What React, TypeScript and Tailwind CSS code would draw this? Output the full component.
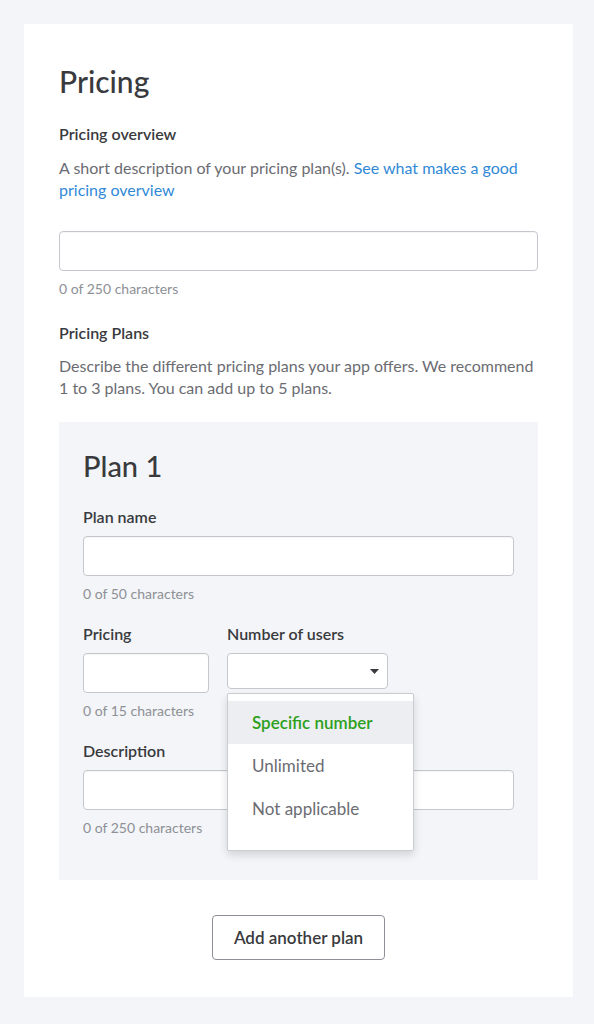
import React from 'react';

const font = { fontFamily: 'Lato, "Open Sans", sans-serif' };

const TextField = ({ className = '' }: { className?: string }) => (
    <div className={`h-[40px] bg-white border border-[#c4c7cc] rounded-[4px] shadow-[inset_0_1px_1px_rgba(0,0,0,0.04)] ${className}`} />
);

const Counter = ({ text }: { text: string }) => (
    <p className="mt-[9px] text-[14px] leading-[18px] text-[#8d9096]">{text}</p>
);

const Label = ({ children }: { children: React.ReactNode }) => (
    <p className="text-[16px] leading-[20px] font-semibold text-[#393a3d]">{children}</p>
);

export default function App() {
    const options = ['Specific number', 'Unlimited', 'Not applicable'];

    return (
        <div className="min-h-[1024px] bg-[#f4f5f8] pt-[24px] pb-[27px]" style={font}>
            <div className="mx-[24px] w-[549px] bg-white px-[35px] pt-[39px] pb-[37px]">
                <h1 className="text-[30px] leading-[36px] font-medium text-[#393a3d]">Pricing</h1>

                {/* Overview */}
                <div className="mt-[25px]">
                    <Label>Pricing overview</Label>
                    <p className="mt-[13px] text-[16px] leading-[22px] text-[#6b6c72]">
                        A short description of your pricing plan(s). <a className="text-[#3189d6]">See what makes a good pricing overview</a>
                    </p>
                    <TextField className="mt-[30px] w-[479px]" />
                    <Counter text="0 of 250 characters" />
                </div>

                {/* Plans */}
                <div className="mt-[25px]">
                    <Label>Pricing Plans</Label>
                    <p className="mt-[12px] text-[16px] leading-[22px] text-[#6b6c72]">
                        Describe the different pricing plans your app offers. We recommend 1 to 3 plans. You can add up to 5 plans.
                    </p>
                </div>

                <div className="mt-[23px] w-[479px] bg-[#f4f5f8] px-[24px] pt-[27px] pb-[43px]">
                    <h2 className="text-[29px] leading-[34px] font-medium text-[#393a3d]">Plan 1</h2>

                    <div className="mt-[24px]">
                        <Label>Plan name</Label>
                        <TextField className="mt-[9px] w-[431px]" />
                        <Counter text="0 of 50 characters" />
                    </div>

                    <div className="mt-[21px] flex gap-[18px]">
                        <div className="w-[126px]">
                            <Label>Pricing</Label>
                            <TextField className="mt-[9px] w-[126px]" />
                            <Counter text="0 of 15 characters" />
                        </div>
                        <div className="relative">
                            <Label>Number of users</Label>
                            <div className="mt-[9px] h-[36px] w-[161px] bg-white border border-[#c4c7cc] rounded-[4px] flex items-center justify-end pr-[8px]">
                                <svg width="9" height="5" viewBox="0 0 9 5">
                                    <path d="M0 0h9L4.5 5z" fill="#393a3d" />
                                </svg>
                            </div>
                            {/* open menu */}
                            <div className="absolute left-0 top-[69px] z-10 w-[187px] bg-white border border-[#c9ccd1] rounded-[2px] shadow-[0_4px_8px_rgba(0,0,0,0.14)] pt-[7px] pb-[20px]">
                                {options.map((opt, i) => (
                                    <div
                                        key={opt}
                                        className={`h-[43px] flex items-center pl-[24px] text-[17px] ${
                                            i === 0 ? 'bg-[#eceef1] text-[#2ca01c] font-semibold' : 'text-[#6b6c72]'
                                        }`}
                                    >
                                        {opt}
                                    </div>
                                ))}
                            </div>
                        </div>
                    </div>

                    <div className="mt-[21px]">
                        <Label>Description</Label>
                        <TextField className="mt-[9px] w-[431px]" />
                        <Counter text="0 of 250 characters" />
                    </div>
                </div>

                <div className="mt-[35px] flex justify-center">
                    <button className="h-[45px] w-[173px] border border-[#8d9096] rounded-[4px] bg-white text-[17px] font-semibold text-[#393a3d]">
                        Add another plan
                    </button>
                </div>
            </div>
        </div>
    );
}
